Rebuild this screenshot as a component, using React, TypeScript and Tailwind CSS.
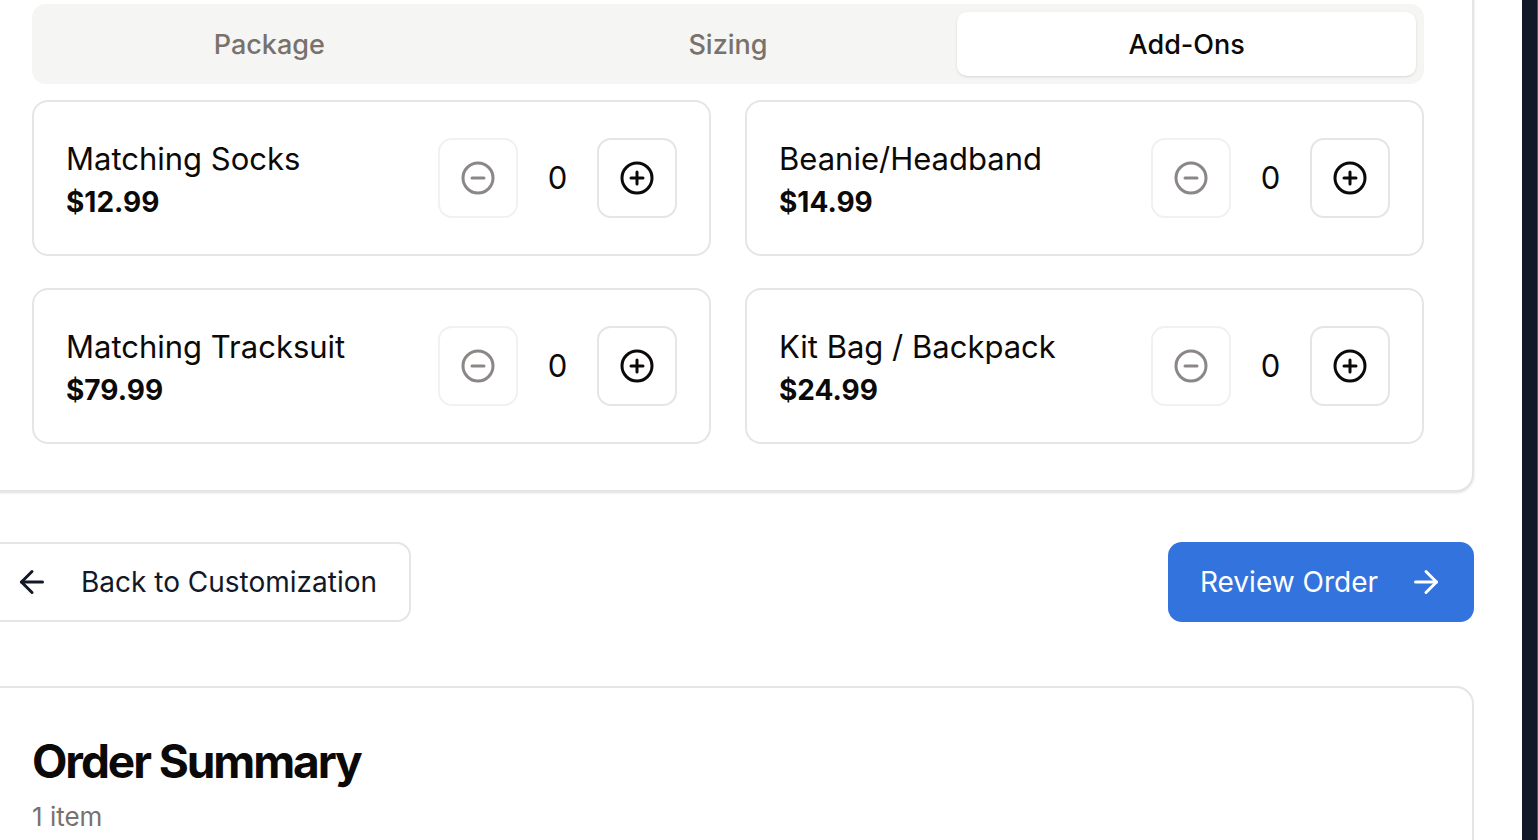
import { ArrowLeft, ArrowRight, CircleMinus, CirclePlus } from "lucide-react";

const tabs = ["Package", "Sizing", "Add-Ons"];

const addOns = [
  { name: "Matching Socks", price: "$12.99" },
  { name: "Beanie/Headband", price: "$14.99" },
  { name: "Matching Tracksuit", price: "$79.99" },
  { name: "Kit Bag / Backpack", price: "$24.99" },
];

function AddOnCard({ name, price }: { name: string; price: string }) {
  return (
    <div className="flex items-start justify-between rounded-[16px] border-2 border-[#e7e5e4] bg-white pl-[32px] pr-[32px] pt-[36px] pb-[36px]">
      <div className="flex h-[80px] flex-col">
        <span className="text-[31px] leading-[42px] text-[#0c0a09]">{name}</span>
        <span className="text-[28px] font-bold leading-[44px] text-[#0c0a09]">{price}</span>
      </div>
      <div className="flex items-center gap-[24px]">
        <button className="flex h-[80px] w-[80px] items-center justify-center rounded-[14px] border-2 border-[#f2f1f0] bg-white">
          <CircleMinus size={36} strokeWidth={2} className="text-[#8a8786]" />
        </button>
        <span className="w-[31px] text-center text-[31px] text-[#0c0a09]">0</span>
        <button className="flex h-[80px] w-[80px] items-center justify-center rounded-[14px] border-2 border-[#e7e5e4] bg-white">
          <CirclePlus size={36} strokeWidth={2} className="text-[#0c0a09]" />
        </button>
      </div>
    </div>
  );
}

export default function App() {
  const active = "Add-Ons";

  return (
    <div className="flex h-[840px] overflow-hidden bg-white font-['Inter',sans-serif]">
      <div className="-ml-[18px] w-[1492px] shrink-0">
        {/* Customization card */}
        <div className="-mt-[46px] rounded-[18px] border-2 border-[#e7e5e4] bg-white px-[48px] pt-[48px] pb-[46px] shadow-sm">
          <div className="grid grid-cols-3 rounded-[14px] bg-[#f5f5f4] p-[8px]">
            {tabs.map((tab) => (
              <div
                key={tab}
                className={`flex h-[64px] items-center justify-center rounded-[10px] pt-[2px] text-[27px] font-medium ${
                  tab === active ? "bg-white text-[#0c0a09] shadow-sm" : "text-[#78716c]"
                }`}
              >
                {tab}
              </div>
            ))}
          </div>
          <div className="mt-[16px] grid grid-cols-2 gap-x-[34px] gap-y-[32px]">
            {addOns.map((a) => (
              <AddOnCard key={a.name} {...a} />
            ))}
          </div>
        </div>

        {/* Navigation */}
        <div className="mt-[50px] flex items-center justify-between">
          <button className="flex h-[80px] items-center gap-[31px] rounded-[14px] border-2 border-[#e7e5e4] bg-white pl-[30px] pr-[32px] text-[28px] text-[#111827]">
            <ArrowLeft size={36} strokeWidth={2} />
            Back to Customization
          </button>
          <button className="flex h-[80px] items-center gap-[30px] rounded-[14px] bg-[#3373de] pl-[32px] pr-[30px] text-[28px] text-white">
            Review Order
            <ArrowRight size={36} strokeWidth={2} />
          </button>
        </div>

        {/* Order summary */}
        <div className="mt-[64px] h-[300px] rounded-[18px] border-2 border-[#e7e5e4] bg-white px-[48px] pt-[45px]">
          <h2 className="text-[46px] font-bold leading-[56px] tracking-[-0.045em] text-[#0c0a09]">Order Summary</h2>
          <p className="mt-[8px] text-[26px] text-[#78716c]">1 item</p>
        </div>
      </div>
      <div className="w-[48px] shrink-0" />
      <div className="w-[16px] shrink-0 border-r border-[#4b5563] bg-[#111827]" />
    </div>
  );
}
